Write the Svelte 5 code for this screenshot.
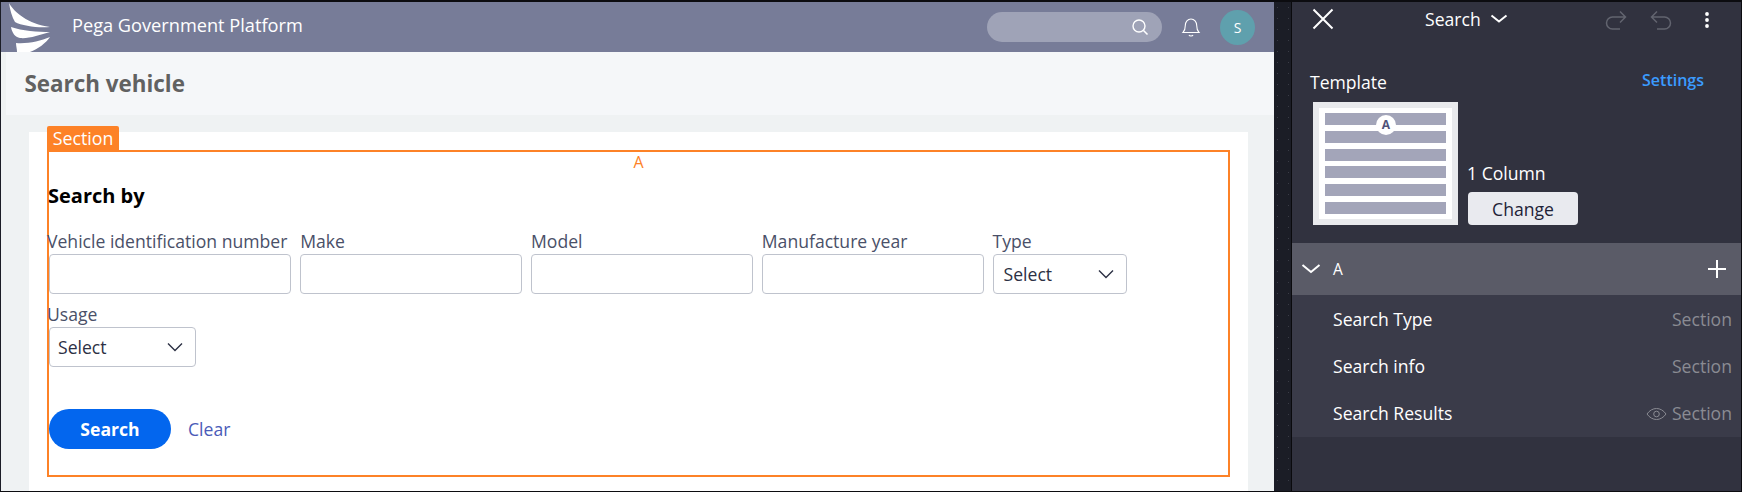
<script>
  const row1 = [
    { label: 'Vehicle identification number', cls: 'w1' },
    { label: 'Make', cls: 'w2' },
    { label: 'Model', cls: 'w2' },
    { label: 'Manufacture year', cls: 'w2' }
  ];
  const items = [
    { name: 'Search Type', hidden: false },
    { name: 'Search info', hidden: false },
    { name: 'Search Results', hidden: true }
  ];
</script>

{#snippet chevron()}
  <svg class="chev" width="18" height="10" viewBox="0 0 18 10"><path d="M2 1.500l7 7 7-7" fill="none" stroke="#2c3044" stroke-width="1.400"/></svg>
{/snippet}

<div class="root">
  <div class="app">
    <header class="top">
      <svg class="logo" width="44" height="50" viewBox="0 0 44 50">
        <path d="M1 1C6 10 20 22 42 25 30 26 14 24 7 20 4 15 2 8 1 1Z" fill="#fff"/>
        <path d="M3 25C14 29 30 30 42 30 32 33 20 37 12 36 7 35 4 31 3 25Z" fill="#fff"/>
        <path d="M8 41C20 42 32 39 42 35 38 41 30 47 22 50L9 50C9 47 8 44 8 41Z" fill="#fff"/>
      </svg>
      <span class="brand">Pega Government Platform</span>
      <div class="tools">
        <div class="search">
          <svg width="18" height="18" viewBox="0 0 18 18"><circle cx="8" cy="8" r="6" fill="none" stroke="#fff" stroke-width="1.400"/><path d="M12.500 12.500l4 4" stroke="#fff" stroke-width="1.600"/></svg>
        </div>
        <svg class="bell" width="20" height="22" viewBox="0 0 20 22"><path d="M2 16.500c2-2 2.300-3.500 2.300-7 0-3.500 2.400-6.500 5.700-6.500s5.700 3 5.700 6.500c0 3.500.3 5 2.300 7zM8 19c.5 1.400 3.500 1.400 4 0" fill="none" stroke="#fff" stroke-width="1.100"/></svg>
        <div class="avatar">S</div>
      </div>
    </header>
    <div class="title"><h1>Search vehicle</h1></div>
    <main class="content">
      <div class="card">
        <div class="sec">
          <span class="tag">Section</span>
          <div class="a">A</div>
          <h2>Search by</h2>
          <div class="fields">
            {#each row1 as f}
              <div class="field {f.cls}"><span class="lab">{f.label}</span><div class="box"></div></div>
            {/each}
            <div class="field w4"><span class="lab">Type</span><div class="box sel"><span>Select</span>{@render chevron()}</div></div>
            <div class="field w5"><span class="lab">Usage</span><div class="box sel"><span>Select</span>{@render chevron()}</div></div>
          </div>
          <div class="actions">
            <button class="primary">Search</button>
            <span class="clear">Clear</span>
          </div>
        </div>
      </div>
    </main>
  </div>
  <div class="strip"></div>
  <aside class="panel">
    <div class="phead">
      <svg class="close" width="24" height="24" viewBox="0 0 24 24"><path d="M2.500 2.500l19 19M21.500 2.500l-19 19" stroke="#fff" stroke-width="2"/></svg>
      <div class="ptitle">Search
        <svg width="18" height="10" viewBox="0 0 18 10"><path d="M1.500 1.500l7.500 6 7.500-6" fill="none" stroke="#fff" stroke-width="2"/></svg>
      </div>
      <svg class="redo" width="22" height="22" viewBox="0 0 22 22"><path d="M20 7H7.500a6 6 0 0 0 0 12H15M15 1.500L20.500 7 15 12.500" fill="none" stroke="#62646f" stroke-width="1.500"/></svg>
      <svg class="undo" width="22" height="22" viewBox="0 0 22 22"><path d="M2 7h12.500a6 6 0 0 1 0 12H7M7 1.500L1.500 7 7 12.500" fill="none" stroke="#62646f" stroke-width="1.500"/></svg>
      <svg class="more" width="6" height="18" viewBox="0 0 6 18"><circle cx="3" cy="3" r="1.900" fill="#fff"/><circle cx="3" cy="9" r="1.900" fill="#fff"/><circle cx="3" cy="15" r="1.900" fill="#fff"/></svg>
    </div>
    <div class="tmplhead"><span>Template</span><span class="settings">Settings</span></div>
    <div class="tmpl">
      <div class="thumb">
        <i></i><i></i><i></i><i></i><i></i><i></i>
        <b>A</b>
      </div>
      <div class="tinfo">
        <span class="cols">1 Column</span>
        <button class="change">Change</button>
      </div>
    </div>
    <div class="regionrow">
      <svg width="20" height="10" viewBox="0 0 20 10"><path d="M1.500 1l8.500 7 8.500-7" fill="none" stroke="#fff" stroke-width="2"/></svg>
      <span class="rname">A</span>
      <svg class="plus" width="18" height="18" viewBox="0 0 18 18"><path d="M9 0v18M0 9h18" stroke="#fff" stroke-width="2"/></svg>
    </div>
    <div class="list">
      {#each items as it}
        <div class="item">
          <span>{it.name}</span>
          <span class="kind">
            {#if it.hidden}
              <svg class="eye" width="21" height="14" viewBox="0 0 21 14"><path d="M1 7c2.500-3.600 6-5.500 9.500-5.500S17.500 3.400 20 7c-2.500 3.600-6 5.500-9.500 5.500S3.500 10.600 1 7z" fill="none" stroke="#8a8b93" stroke-width="1"/><circle cx="10.500" cy="7" r="2.800" fill="none" stroke="#8a8b93" stroke-width="1"/></svg>
            {/if}
            Section
          </span>
        </div>
      {/each}
    </div>
  </aside>
</div>

<style>
  :global(body) { margin: 0; background: #000; }
  .root {
    width: 1742px; height: 492px; box-sizing: border-box;
    display: flex; overflow: hidden;
    border-top: 2px solid #0c0c10; border-bottom: 1px solid #0c0c10;
    font-family: "Open Sans", sans-serif; font-size: 17.600px; background: #1b1d26;
  }
  .app { width: 1274px; flex: none; display: flex; flex-direction: column; background: #eff2f3; border-left: 1px solid #1b1d26; box-sizing: border-box; }
  .top {
    height: 50px; flex: none; background: #777c98; display: flex; align-items: center;
    color: #fff; position: relative;
  }
  .logo { margin-left: 7px; flex: none; }
  .brand { margin-left: 20px; font-size: 18.200px; margin-bottom: 4px; }
  .tools { margin-left: auto; display: flex; align-items: center; margin-right: 19px; }
  .search {
    width: 175px; height: 30px; border-radius: 15px; background: #9fa3b7;
    display: flex; align-items: center; justify-content: flex-end; padding-right: 13px; box-sizing: border-box;
  }
  .bell { margin-left: 19px; }
  .avatar {
    width: 35px; height: 35px; border-radius: 50%; background: #5fa0ad; margin-left: 19px;
    display: flex; align-items: center; justify-content: center; font-size: 14px;
  }
  .title { height: 63px; flex: none; background: #f5f7f9; margin-left: 5px; display: flex; align-items: center; }
  h1 { margin: 0 0 0 18.500px; font-size: 22.400px; font-weight: 700; color: #616161; }
  .content { flex: 1; min-height: 0; padding: 17px 26px 0 28px; }
  .card { background: #fff; height: 100%; padding: 18px 18px 0 18px; box-sizing: border-box; }
  .sec {
    position: relative; border: 2px solid #fd8227; height: 327px; box-sizing: border-box;
  }
  .tag {
    position: absolute; left: -2px; top: -26px; width: 72px; height: 26px; background: #fd8227;
    color: #fff; font-size: 17.800px; line-height: 24px; text-align: center; border-radius: 2px 2px 0 0;
  }
  .a { text-align: center; color: #fd8227; font-size: 16px; line-height: 20px; margin-top: 0; }
  h2 { margin: 11px 0 0 -1px; font-size: 20px; font-weight: 700; color: #000; line-height: 26px; }
  .fields { display: flex; flex-wrap: wrap; column-gap: 8.800px; margin-top: 20px; width: 1100px; }
  .field { display: flex; flex-direction: column; height: 73px; }
  .w1 { width: 242.400px; }
  .w2 { width: 222px; }
  .w4 { width: 134px; }
  .w5 { width: 147px; }
  .lab { line-height: 25px; height: 25px; color: #4a5068; white-space: nowrap; }
  .w1 .lab, .w5 .lab { margin-left: -2px; }
  .box {
    height: 40px; box-sizing: border-box; border: 1px solid #bfc3cd; border-radius: 4px; background: #fff;
  }
  .sel { display: flex; align-items: center; justify-content: space-between; padding: 0 11px 0 10px; color: #2c3044; }
  .w5 .sel { padding-left: 8px; }
  .actions { display: flex; align-items: center; margin-top: 34px; }
  .primary {
    width: 122px; height: 40px; border: 0; border-radius: 20px; background: #0366ee; color: #fff;
    font: 700 17.600px "Open Sans", sans-serif;
  }
  .clear { margin-left: 17px; color: #4a5bb8; }
  .strip {
    width: 17px; flex: none; background-color: #1b1d26; border-right: 1px solid #0a0a0d;
    background-image: radial-gradient(circle, #3a3c46 0.8px, transparent 1px); background-size: 11px 11px; background-position: -2px 0;
  }
  .panel { flex: 1; background: #31323f; color: #fff; display: flex; flex-direction: column; border-right: 1px solid #0c0c10; min-width: 0; }
  .phead { height: 34px; position: relative; flex: none; }
  .close { position: absolute; left: 19px; top: 5px; }
  .ptitle { position: absolute; left: 133px; top: 5px; line-height: 24px; display: flex; align-items: center; gap: 9px; }
  .redo { position: absolute; left: 313px; top: 8px; }
  .undo { position: absolute; left: 358px; top: 8px; }
  .more { position: absolute; left: 412px; top: 9px; }
  .tmplhead { display: flex; justify-content: space-between; align-items: center; padding: 34px 0 0 18px; height: 24px; flex: none; }
  .settings { color: #3b9cff; font-weight: 600; font-size: 16px; margin-right: 37px; margin-top: -4px; }
  .tmpl { display: flex; align-items: flex-end; margin: 8px 0 0 21px; gap: 10px; }
  .thumb {
    position: relative; width: 145px; height: 123px; box-sizing: border-box; background: #fff;
    border: 6px solid #e9eaed; padding: 5px 6px; display: flex; flex-direction: column; justify-content: space-between;
  }
  .thumb i { display: block; height: 12px; background: #a3a5b9; }
  .thumb b {
    position: absolute; left: 57px; top: 7px; width: 20px; height: 20px; border-radius: 50%; background: #fff;
    color: #50537a; font-size: 12px; line-height: 20px; text-align: center;
  }
  .tinfo { display: flex; flex-direction: column; align-items: flex-start; gap: 7px; }
  .cols { margin-left: -1px; }
  .change {
    width: 110px; height: 33px; border: 0; border-radius: 4px; background: #e9eaef; color: #1e2238;
    font: 17.600px "Open Sans", sans-serif;
  }
  .regionrow {
    margin-top: 18px; height: 52px; background: #5a5b67; display: flex; align-items: center; padding: 0 15px 0 9px; flex: none;
  }
  .rname { margin-left: 12px; font-size: 15.500px; }
  .plus { margin-left: auto; }
  .list { background: #3a3b49; height: 142px; flex: none; }
  .item { height: 47px; display: flex; justify-content: space-between; align-items: center; padding: 0 9px 0 41px; }
  .kind { color: #8a8b93; display: flex; align-items: center; gap: 5px; }
  .eye { margin-top: 3px; }
</style>
